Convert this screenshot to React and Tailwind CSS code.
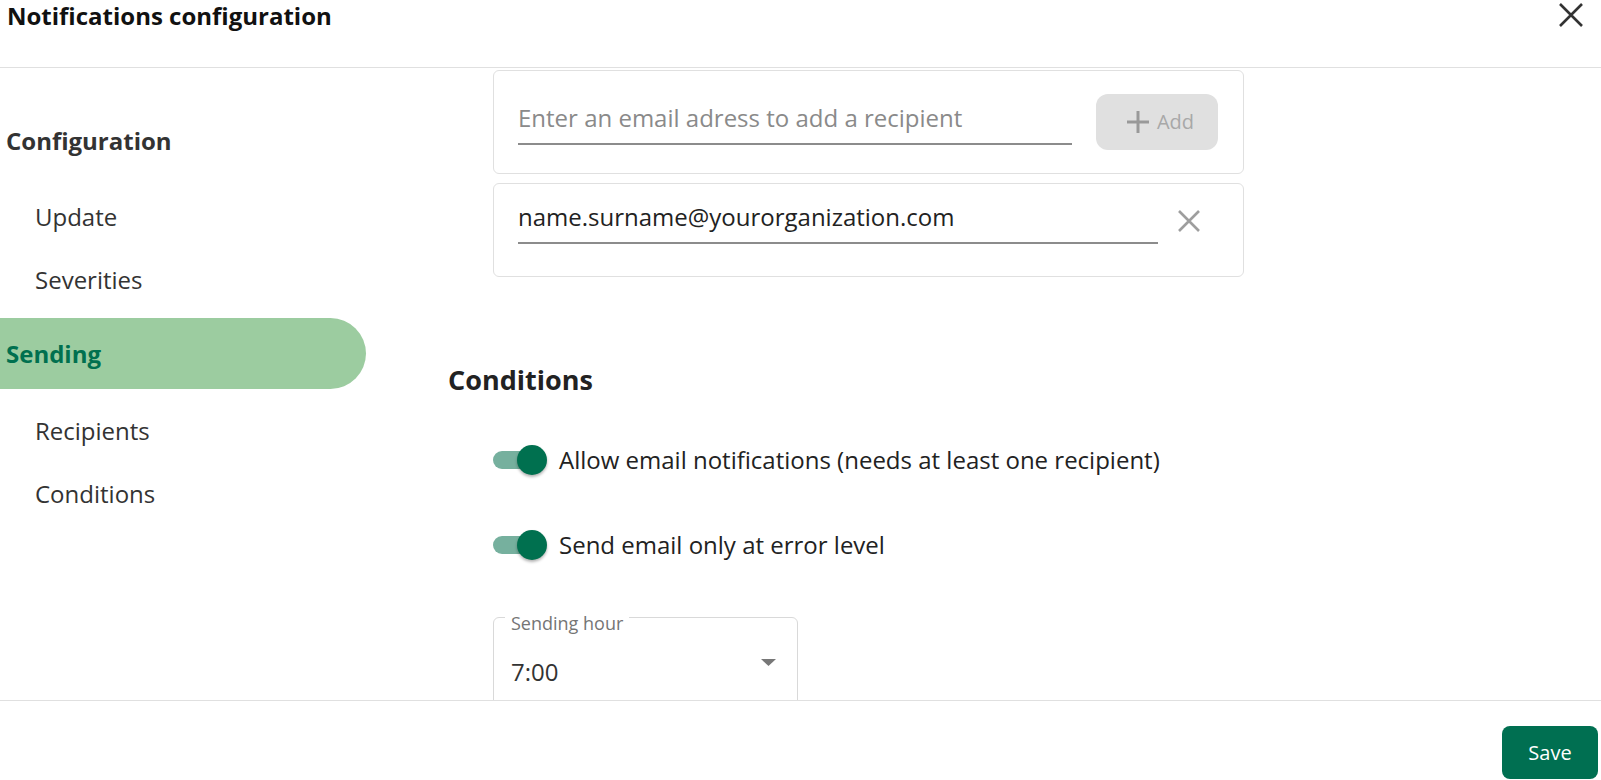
import { useState } from "react";

const font = { fontFamily: "'Open Sans', 'Noto Sans', sans-serif" };

function App() {
  const [allowEmail, setAllowEmail] = useState(true);
  const [errorOnly, setErrorOnly] = useState(true);

  const subItems = ["Update", "Severities"];
  const subItems2 = ["Recipients", "Conditions"];

  return (
    <div
      className="w-full h-[780px] bg-white flex flex-col overflow-hidden text-[#333]"
      style={font}
    >
      {/* HEADER */}
      <header className="h-[68px] shrink-0 border-b border-[#e0e0e0] flex items-start justify-between">
        <h1 className="pl-[7px] text-[24px] leading-[32px] font-bold text-[#111]">
          Notifications configuration
        </h1>
        <button className="mt-[3px] mr-[18px] w-[24px] h-[24px]">
          <svg viewBox="0 0 24 24" width="24" height="24">
            <path d="M1 1 L23 23 M23 1 L1 23" stroke="#333" strokeWidth="2.6" />
          </svg>
        </button>
      </header>

      {/* BODY */}
      <div className="flex flex-1 overflow-hidden">
        {/* SIDEBAR */}
        <aside className="w-[366px] shrink-0 pt-[42px]">
          <div className="h-[62px] flex items-center pl-[6px] text-[24px] font-bold text-[#333]">
            Configuration
          </div>
          <div className="mt-[13px]">
            {subItems.map((s) => (
              <div key={s} className="h-[63px] flex items-center pl-[35px] text-[24px]">
                {s}
              </div>
            ))}
          </div>
          <div className="mt-[7px] h-[71px] flex items-center pl-[6px] rounded-r-full bg-[#9ccca0] text-[24px] font-bold text-[#00704f]">
            Sending
          </div>
          <div className="mt-[10px]">
            {subItems2.map((s) => (
              <div key={s} className="h-[63px] flex items-center pl-[35px] text-[24px]">
                {s}
              </div>
            ))}
          </div>
        </aside>

        {/* MAIN */}
        <main className="flex-1 pt-[2px] pl-[82px]">
          <div className="ml-[45px] w-[751px]">
            {/* add recipient */}
            <div className="h-[104px] border border-[#e0e0e0] rounded-[6px] flex items-center pl-[24px] pr-[25px]">
              <div className="flex-1 border-b-2 border-[#8c8c8c] pb-[9px] mt-[2px]">
                <p className="text-[24px] leading-[32px] text-[#8a8a8a]">
                  Enter an email adress to add a recipient
                </p>
              </div>
              <button className="ml-[24px] w-[122px] h-[56px] pl-[7px] rounded-[12px] bg-[#e0e0e0] flex items-center justify-center gap-[8px] text-[20px] text-[#a8a8a8]">
                <svg viewBox="0 0 22 22" width="22" height="22">
                  <path d="M11 0 V22 M0 11 H22" stroke="#999" strokeWidth="3" />
                </svg>
                <span>Add</span>
              </button>
            </div>

            {/* recipient */}
            <div className="mt-[9px] h-[94px] border border-[#e0e0e0] rounded-[6px] flex items-start pl-[24px] pt-[17px] pr-[43px]">
              <div className="flex-1 border-b-2 border-[#8c8c8c] pb-[9px]">
                <p className="text-[24px] leading-[32px] text-[#222]">
                  name.surname@yourorganization.com
                </p>
              </div>
              <button className="ml-[20px] mt-[9px] w-[22px] h-[22px]">
                <svg viewBox="0 0 22 22" width="22" height="22">
                  <path d="M1 1 L21 21 M21 1 L1 21" stroke="#9e9e9e" strokeWidth="2.6" />
                </svg>
              </button>
            </div>
          </div>

          {/* CONDITIONS */}
          <h2 className="mt-[87px] text-[27px] leading-[32px] font-bold text-[#222]">
            Conditions
          </h2>

          <div className="ml-[45px]">
            <ToggleRow
              className="mt-[40px]"
              checked={allowEmail}
              onChange={() => setAllowEmail(!allowEmail)}
              label="Allow email notifications (needs at least one recipient)"
            />
            <ToggleRow
              className="mt-[37px]"
              checked={errorOnly}
              onChange={() => setErrorOnly(!errorOnly)}
              label="Send email only at error level"
            />

            {/* sending hour */}
            <div className="relative mt-[48px] w-[305px] h-[90px] border border-[#d9d9d9] rounded-[6px] px-[17px]">
              <span className="absolute -top-[4px] left-[11px] px-[6px] bg-white text-[18px] leading-[18px] text-[#757575]">
                Sending hour
              </span>
              <div className="flex items-center justify-between pt-[38px]">
                <span className="text-[24px] leading-[32px] text-[#333]">7:00</span>
                <svg viewBox="0 0 15 7" width="15" height="7" className="mr-[4px] -mt-[20px]">
                  <path d="M0 0 H15 L7.5 7 Z" fill="#777" />
                </svg>
              </div>
            </div>
          </div>
        </main>
      </div>

      {/* FOOTER */}
      <footer className="h-[80px] shrink-0 border-t border-[#e0e0e0] flex justify-end items-start pt-[25px] pr-[3px]">
        <button className="w-[96px] h-[53px] rounded-[8px] bg-[#006f51] text-white text-[20px] font-medium">
          Save
        </button>
      </footer>
    </div>
  );
}

/* ---------- Helpers ---------- */

function ToggleRow({ checked, onChange, label, className }) {
  return (
    <div className={`h-[48px] flex items-center ${className}`}>
      <button onClick={onChange} className="relative w-[54px] h-[30px] shrink-0">
        <span
          className={`absolute left-0 top-[6px] w-[44px] h-[18px] rounded-full ${
            checked ? "bg-[#76b09e]" : "bg-[#bdbdbd]"
          }`}
        />
        <span
          className={`absolute top-0 w-[30px] h-[30px] rounded-full shadow-[0_2px_3px_rgba(0,0,0,0.3)] ${
            checked ? "right-0 bg-[#00704f]" : "left-0 bg-[#fafafa]"
          }`}
        />
      </button>
      <span className="ml-[12px] text-[24px] leading-[32px] text-[#222]">{label}</span>
    </div>
  );
}

export default App;
